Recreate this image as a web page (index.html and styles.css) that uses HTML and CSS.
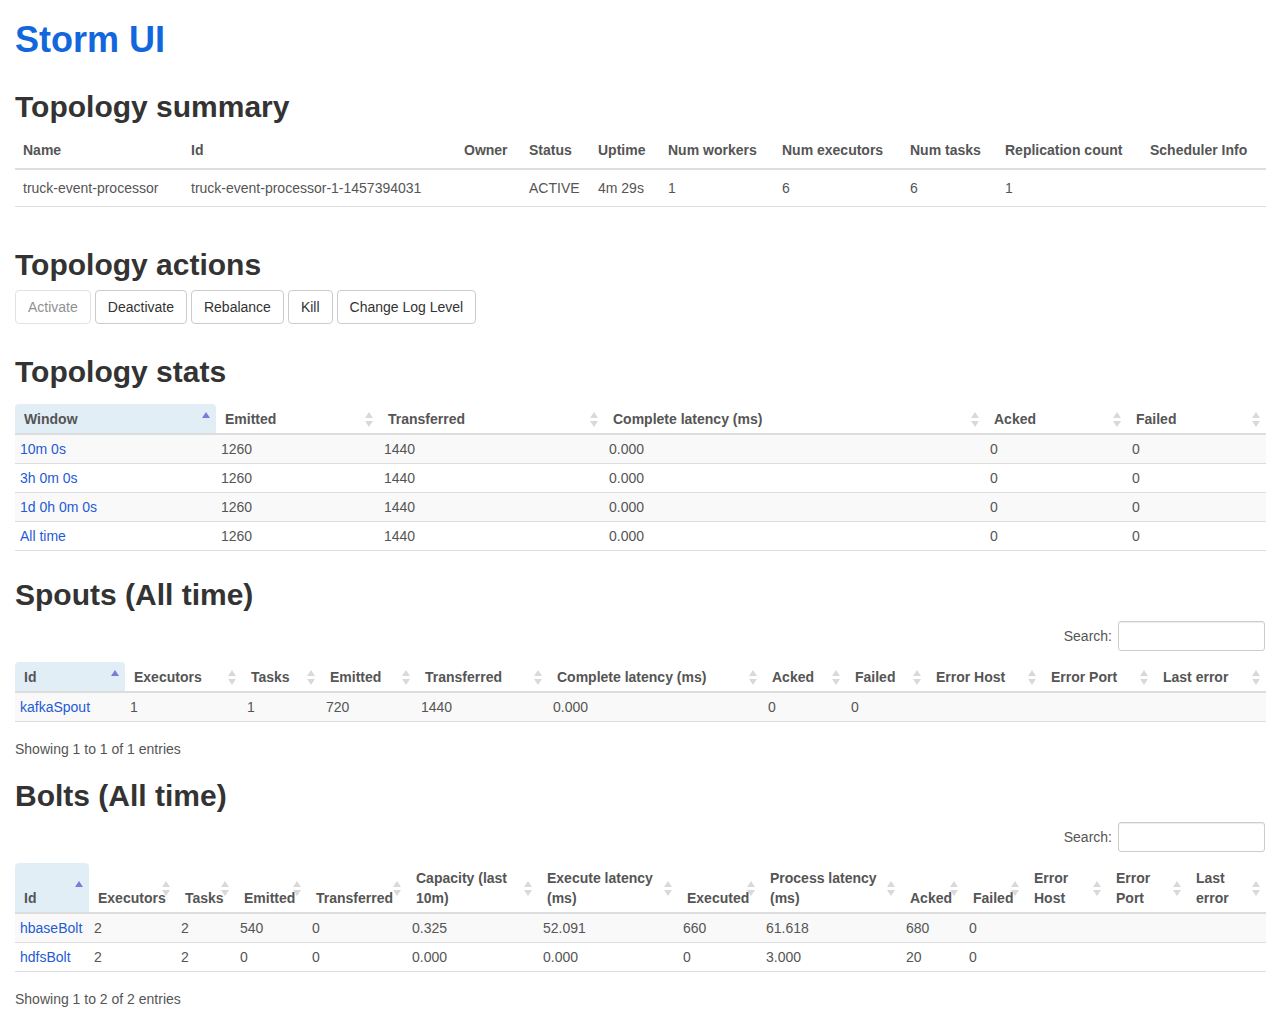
FILE: index.html
```html
<!DOCTYPE html>
<html lang="en">
<head>
<meta charset="utf-8">
<title>Storm UI</title>
<link rel="stylesheet" href="styles.css">
</head>
<body>
<div class="container">
  <h1 class="brand"><a href="#">Storm UI</a></h1>

  <h2 class="h-summary">Topology summary</h2>
  <table class="table summary">
    <colgroup>
      <col class="s1"><col class="s2"><col class="s3"><col class="s4"><col class="s5">
      <col class="s6"><col class="s7"><col class="s8"><col class="s9"><col class="s10">
    </colgroup>
    <thead>
      <tr><th>Name</th><th>Id</th><th>Owner</th><th>Status</th><th>Uptime</th><th>Num workers</th><th>Num executors</th><th>Num tasks</th><th>Replication count</th><th>Scheduler Info</th></tr>
    </thead>
    <tbody>
      <tr><td>truck-event-processor</td><td>truck-event-processor-1-1457394031</td><td></td><td>ACTIVE</td><td>4m 29s</td><td>1</td><td>6</td><td>6</td><td>1</td><td></td></tr>
    </tbody>
  </table>

  <h2 class="h-actions">Topology actions</h2>
  <div class="actions">
    <button class="btn" disabled>Activate</button>
    <button class="btn">Deactivate</button>
    <button class="btn">Rebalance</button>
    <button class="btn">Kill</button>
    <button class="btn">Change Log Level</button>
  </div>

  <h2 class="h-stats">Topology stats</h2>
  <table class="dt stats">
    <colgroup>
      <col class="t1"><col class="t2"><col class="t3"><col class="t4"><col class="t5"><col class="t6">
    </colgroup>
    <thead>
      <tr>
        <th class="asc">Window<span class="sort"></span></th>
        <th>Emitted<span class="sort"></span></th>
        <th>Transferred<span class="sort"></span></th>
        <th>Complete latency (ms)<span class="sort"></span></th>
        <th>Acked<span class="sort"></span></th>
        <th>Failed<span class="sort"></span></th>
      </tr>
    </thead>
    <tbody>
      <tr><td><a href="#">10m 0s</a></td><td>1260</td><td>1440</td><td>0.000</td><td>0</td><td>0</td></tr>
      <tr><td><a href="#">3h 0m 0s</a></td><td>1260</td><td>1440</td><td>0.000</td><td>0</td><td>0</td></tr>
      <tr><td><a href="#">1d 0h 0m 0s</a></td><td>1260</td><td>1440</td><td>0.000</td><td>0</td><td>0</td></tr>
      <tr><td><a href="#">All time</a></td><td>1260</td><td>1440</td><td>0.000</td><td>0</td><td>0</td></tr>
    </tbody>
  </table>

  <h2 class="h-spouts">Spouts (All time)</h2>
  <div class="filter"><label>Search:<input type="search" class="search"></label></div>
  <table class="dt spouts">
    <colgroup>
      <col class="p1"><col class="p2"><col class="p3"><col class="p4"><col class="p5"><col class="p6">
      <col class="p7"><col class="p8"><col class="p9"><col class="p10"><col class="p11">
    </colgroup>
    <thead>
      <tr>
        <th class="asc">Id<span class="sort"></span></th>
        <th>Executors<span class="sort"></span></th>
        <th>Tasks<span class="sort"></span></th>
        <th>Emitted<span class="sort"></span></th>
        <th>Transferred<span class="sort"></span></th>
        <th>Complete latency (ms)<span class="sort"></span></th>
        <th>Acked<span class="sort"></span></th>
        <th>Failed<span class="sort"></span></th>
        <th>Error Host<span class="sort"></span></th>
        <th>Error Port<span class="sort"></span></th>
        <th>Last error<span class="sort"></span></th>
      </tr>
    </thead>
    <tbody>
      <tr><td><a href="#">kafkaSpout</a></td><td>1</td><td>1</td><td>720</td><td>1440</td><td>0.000</td><td>0</td><td>0</td><td></td><td></td><td></td></tr>
    </tbody>
  </table>
  <div class="info">Showing 1 to 1 of 1 entries</div>

  <h2 class="h-bolts">Bolts (All time)</h2>
  <div class="filter"><label>Search:<input type="search" class="search"></label></div>
  <table class="dt bolts">
    <colgroup>
      <col class="b1"><col class="b2"><col class="b3"><col class="b4"><col class="b5"><col class="b6"><col class="b7">
      <col class="b8"><col class="b9"><col class="b10"><col class="b11"><col class="b12"><col class="b13"><col class="b14">
    </colgroup>
    <thead>
      <tr>
        <th class="asc">Id<span class="sort"></span></th>
        <th>Executors<span class="sort"></span></th>
        <th>Tasks<span class="sort"></span></th>
        <th>Emitted<span class="sort"></span></th>
        <th>Transferred<span class="sort"></span></th>
        <th>Capacity (last<br>10m)<span class="sort"></span></th>
        <th>Execute latency<br>(ms)<span class="sort"></span></th>
        <th>Executed<span class="sort"></span></th>
        <th>Process latency<br>(ms)<span class="sort"></span></th>
        <th>Acked<span class="sort"></span></th>
        <th>Failed<span class="sort"></span></th>
        <th>Error<br>Host<span class="sort"></span></th>
        <th>Error<br>Port<span class="sort"></span></th>
        <th>Last<br>error<span class="sort"></span></th>
      </tr>
    </thead>
    <tbody>
      <tr><td><a href="#">hbaseBolt</a></td><td>2</td><td>2</td><td>540</td><td>0</td><td>0.325</td><td>52.091</td><td>660</td><td>61.618</td><td>680</td><td>0</td><td></td><td></td><td></td></tr>
      <tr><td><a href="#">hdfsBolt</a></td><td>2</td><td>2</td><td>0</td><td>0</td><td>0.000</td><td>0.000</td><td>0</td><td>3.000</td><td>20</td><td>0</td><td></td><td></td><td></td></tr>
    </tbody>
  </table>
  <div class="info">Showing 1 to 2 of 2 entries</div>
</div>
</body>
</html>
```

FILE: styles.css
```css
* { box-sizing: border-box; }

html, body {
  margin: 0;
  background: #fff;
}

body {
  font-family: "Liberation Sans", Arial, Helvetica, sans-serif;
  font-size: 14px;
  line-height: 20px;
  color: #333;
}

.container {
  padding: 0 15px 20px;
}

a {
  color: #1f5bd6;
  text-decoration: none;
}

.brand {
  margin: 20px 0 0;
  font-size: 36px;
  line-height: 40px;
  font-weight: 700;
}

.brand a {
  color: #1167db;
}

h2 {
  font-size: 30px;
  line-height: 33px;
  font-weight: 700;
  color: #333;
  margin: 0;
}

.h-summary { margin-top: 30px; }
.h-actions { margin-top: 41px; }
.h-stats { margin-top: 31px; }
.h-spouts { margin-top: 27px; }
.h-bolts { margin-top: 20px; }

/* ---------- generic table ---------- */
table {
  width: 100%;
  border-collapse: collapse;
  border-spacing: 0;
  table-layout: fixed;
}

th, td {
  text-align: left;
  color: #555;
  white-space: nowrap;
  overflow: visible;
}

th { font-weight: 700; }

/* ---------- summary table ---------- */
.summary {
  margin-top: 9px;
  border-bottom: 1px solid #ddd;
}

.summary th,
.summary td {
  padding: 8px;
}

.summary th {
  border-bottom: 2px solid #ddd;
}

.s1 { width: 168px; }
.s2 { width: 273px; }
.s3 { width: 65px; }
.s4 { width: 69px; }
.s5 { width: 70px; }
.s6 { width: 114px; }
.s7 { width: 128px; }
.s8 { width: 95px; }
.s9 { width: 145px; }
.s10 { width: 124px; }

/* ---------- action buttons ---------- */
.actions {
  margin-top: 9px;
  display: flex;
  gap: 4px;
}

.btn {
  font-family: inherit;
  font-size: 14px;
  line-height: 20px;
  height: 34px;
  padding: 6px 12px;
  color: #333;
  background: #fff;
  border: 1px solid #ccc;
  border-radius: 4px;
}

.btn[disabled] {
  opacity: 0.55;
}

/* ---------- datatables ---------- */
.dt th {
  position: relative;
  padding: 5px 4px 4px 9px;
  border-bottom: 2px solid #ddd;
  vertical-align: bottom;
}

.dt th.asc {
  background: #e2eef6;
  border-radius: 4px 4px 0 0;
}

.dt td {
  padding: 4px 5px;
  height: 29px;
  border-bottom: 1px solid #ddd;
}

.dt tbody tr:nth-child(odd) td {
  background: #f9f9f9;
}

.sort {
  position: absolute;
  right: 6px;
  top: 50%;
  width: 8px;
  height: 15px;
  margin-top: -7px;
}

.sort::before,
.sort::after {
  content: "";
  position: absolute;
  left: 0;
  width: 0;
  height: 0;
  border-left: 4px solid transparent;
  border-right: 4px solid transparent;
}

.sort::before {
  top: 0;
  border-bottom: 6px solid #d9d9d9;
}

.sort::after {
  bottom: 0;
  border-top: 6px solid #d9d9d9;
}

.asc .sort::before {
  border-bottom-color: #7b7bdc;
}

.asc .sort::after {
  display: none;
}

.stats { margin-top: 16px; }

.t1 { width: 201px; }
.t2 { width: 163px; }
.t3 { width: 225px; }
.t4 { width: 381px; }
.t5 { width: 142px; }
.t6 { width: 139px; }

/* ---------- filter + info ---------- */
.filter {
  margin-top: 10px;
  display: flex;
  justify-content: flex-end;
  margin-right: 1px;
}

.filter label {
  display: flex;
  align-items: center;
  color: #555;
}

.search {
  width: 147px;
  height: 30px;
  margin-left: 6px;
  border: 1px solid #ccc;
  border-radius: 3px;
  padding: 4px 8px;
  font-family: inherit;
  font-size: 12px;
  box-shadow: inset 0 1px 1px rgba(0, 0, 0, 0.075);
}

.spouts,
.bolts {
  margin-top: 11px;
}

.info {
  margin-top: 17px;
  color: #555;
}

.p1 { width: 110px; }
.p2 { width: 117px; }
.p3 { width: 79px; }
.p4 { width: 95px; }
.p5 { width: 132px; }
.p6 { width: 215px; }
.p7 { width: 83px; }
.p8 { width: 81px; }
.p9 { width: 115px; }
.p10 { width: 112px; }
.p11 { width: 112px; }

.b1 { width: 74px; }
.b2 { width: 87px; }
.b3 { width: 59px; }
.b4 { width: 72px; }
.b5 { width: 100px; }
.b6 { width: 131px; }
.b7 { width: 140px; }
.b8 { width: 83px; }
.b9 { width: 140px; }
.b10 { width: 63px; }
.b11 { width: 61px; }
.b12 { width: 82px; }
.b13 { width: 80px; }
.b14 { width: 79px; }
```
